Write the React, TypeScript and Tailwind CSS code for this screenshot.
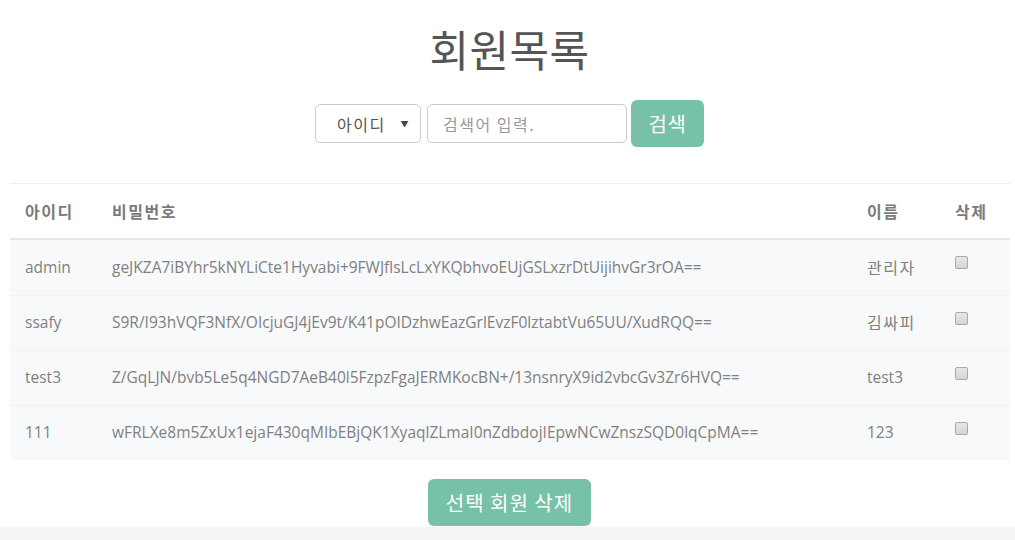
import React from "react";

const rows = [
  { id: "admin", pw: "geJKZA7iBYhr5kNYLiCte1Hyvabi+9FWJflsLcLxYKQbhvoEUjGSLxzrDtUijihvGr3rOA==", name: "관리자", ko: true },
  { id: "ssafy", pw: "S9R/I93hVQF3NfX/OIcjuGJ4jEv9t/K41pOIDzhwEazGrlEvzF0lztabtVu65UU/XudRQQ==", name: "김싸피", ko: true },
  { id: "test3", pw: "Z/GqLJN/bvb5Le5q4NGD7AeB40l5FzpzFgaJERMKocBN+/13nsnryX9id2vbcGv3Zr6HVQ==", name: "test3", ko: false },
  { id: "111", pw: "wFRLXe8m5ZxUx1ejaF430qMIbEBjQK1XyaqlZLmaI0nZdbdojIEpwNCwZnszSQD0lqCpMA==", name: "123", ko: false },
];

const KO = { fontFamily: '"Noto Sans CJK KR", sans-serif' };

function Box() {
  return (
    <div className="w-[13px] h-[13px] rounded-[2px] border border-[#a9a9a9] bg-gradient-to-b from-[#e8e8e8] to-[#d4d4d4]" />
  );
}

export default function App() {
  return (
    <div
      className="w-[1015px] h-[540px] bg-[#f4f4f4] text-[#808080]"
      style={{ fontFamily: '"Open Sans", "Noto Sans CJK KR", sans-serif' }}
    >
      <div className="bg-white h-[527px]">
        <div className="ml-[9px] w-[1001px] flex flex-col items-center">
          <h1 className="mt-[22px] h-[52px] leading-[52px] text-[43px] text-[#555] font-normal tracking-[0.5px]" style={KO}>
            회원목록
          </h1>
          <div className="mt-[26px] h-[47px] flex items-center" style={KO}>
            <div className="w-[106px] h-[39px] border border-[#ccc] rounded-[5px] flex items-center justify-between pl-[21px] pr-[10px] text-[16px] tracking-[1.5px] text-[#555]">
              <span>아이디</span>
              <span className="text-[8px] text-[#444]">▼</span>
            </div>
            <div className="ml-[6px] w-[200px] h-[39px] border border-[#ccc] rounded-[5px] flex items-center pl-[15px] text-[16px] tracking-[1.5px] text-[#999]">
              검색어 입력.
            </div>
            <div className="ml-[4px] w-[73px] h-[47px] rounded-[6px] bg-[#77c1a9] text-white text-[20px] tracking-[0.5px] flex items-center justify-center">
              검색
            </div>
          </div>
          <div className="mt-[36px] ml-[1px] w-[1000px] border-t border-[#eee] text-[15.5px]">
            <div className="flex h-[56px] items-center border-b-2 border-[#e6e6e6] font-bold text-[#7a7a7a] text-[16px] tracking-[1.5px]" style={KO}>
              <div className="w-[87px] pl-[15px]">아이디</div>
              <div className="w-[755px] pl-[15px]">비밀번호</div>
              <div className="w-[88px] pl-[15px]">이름</div>
              <div className="w-[70px] pl-[15px]">삭제</div>
            </div>
            {rows.map((r, i) => (
              <div key={i} className={`flex h-[55px] items-center bg-[#f8f9fa] ${i > 0 ? "border-t border-[#f1f2f3]" : ""}`}>
                <div className="w-[87px] pl-[15px]">{r.id}</div>
                <div className="w-[755px] pl-[15px] whitespace-nowrap">{r.pw}</div>
                <div className="w-[88px] pl-[15px]">
                  {r.ko ? (
                    <span className="text-[16px] tracking-[1.5px]" style={KO}>{r.name}</span>
                  ) : (
                    r.name
                  )}
                </div>
                <div className="w-[70px] pl-[15px] self-start pt-[16px]"><Box /></div>
              </div>
            ))}
          </div>
          <div className="mt-[19px] w-[163px] h-[47px] rounded-[6px] bg-[#77c1a9] text-white text-[20px] tracking-[1px] flex items-center justify-center" style={KO}>
            선택 회원 삭제
          </div>
        </div>
      </div>
    </div>
  );
}
